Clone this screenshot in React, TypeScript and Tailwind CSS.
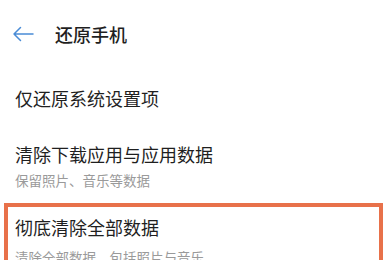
export default function App() {
  return (
    <div
      className="w-[387px] h-[260px] overflow-hidden bg-white text-[#1f1f1f]"
      style={{ fontFamily: '"Noto Sans CJK SC", "Noto Sans", sans-serif' }}
    >
      <div className="flex h-[68px] items-center">
        <svg className="ml-[12px]" width="22" height="16" viewBox="0 0 22 16" fill="none">
          <path d="M21 8H2M8.5 1.5L2 8l6.5 6.5" stroke="#4a8cd6" strokeWidth="1.5" strokeLinecap="round" strokeLinejoin="round" />
        </svg>
        <span className="ml-[21px] text-[18px] leading-[24px] font-medium">还原手机</span>
      </div>

      <div className="mt-[18px] px-[15px] text-[18px] leading-[24px]">仅还原系统设置项</div>

      <div className="mt-[32px] px-[15px]">
        <div className="text-[18px] leading-[24px]">清除下载应用与应用数据</div>
        <div className="mt-[4px] text-[13.5px] leading-[20px] text-[#9a9a9a]">保留照片、音乐等数据</div>
      </div>

      <div className="mx-[4px] mt-[13px] border-[4px] border-[#e8714a] px-[7px] pt-[8px] pb-[12px]">
        <div className="text-[18px] leading-[24px]">彻底清除全部数据</div>
        <div className="mt-[8px] text-[13.5px] leading-[20px] text-[#9a9a9a]">清除全部数据，包括照片与音乐</div>
      </div>
    </div>
  )
}
